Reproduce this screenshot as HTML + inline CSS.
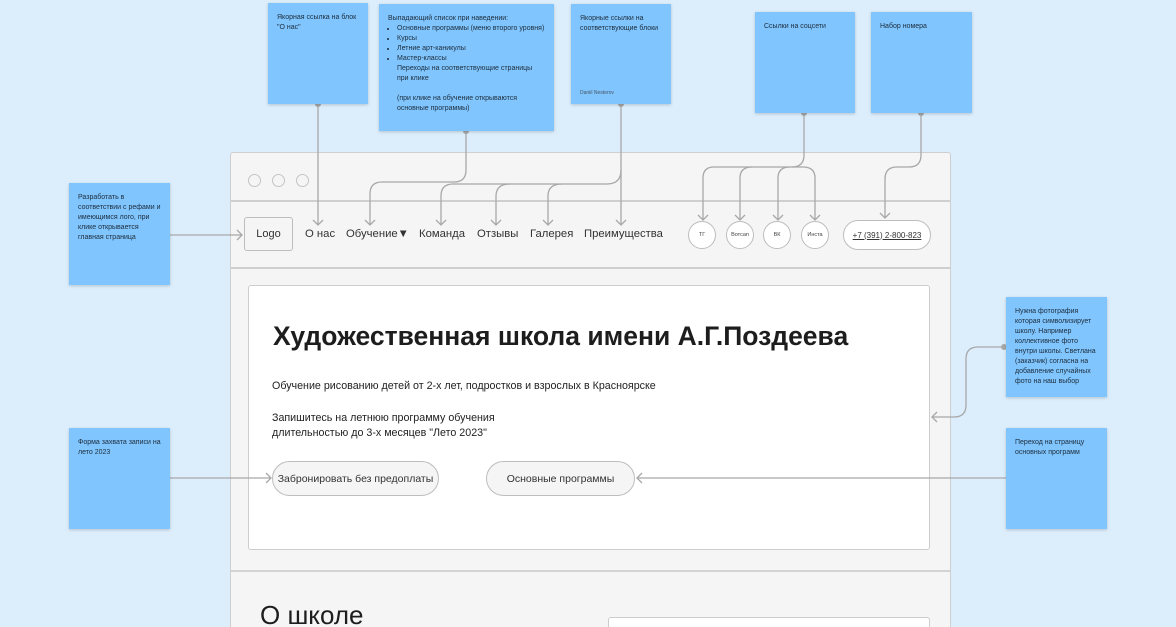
<!DOCTYPE html>
<html><head><meta charset="utf-8"><style>
*{margin:0;padding:0;box-sizing:border-box}
html,body{width:1176px;height:627px;overflow:hidden}
body{background:#dcedfb;font-family:"Liberation Sans","Noto Sans CJK SC",sans-serif;position:relative;color:#222}
.st{position:absolute;background:#80c5fd;box-shadow:0 1px 3px rgba(0,0,0,.18);font-size:7px;line-height:10px;color:#1c2c3c;padding:10px 9px}
.st ul{margin-left:9px}
.fr{position:absolute;left:230px;top:152px;width:721px;height:475px;background:#f5f5f5;border:1.5px solid #cfcfcf;border-bottom:none;border-radius:3px 3px 0 0}
.abs{position:absolute}
.nav{position:absolute;top:228px;font-size:11.3px;color:#333;white-space:nowrap}
.c{position:absolute;top:221px;width:28px;height:28px;border:1.5px solid #bdbdbd;border-radius:50%;background:#fff;font-size:5.5px;display:flex;align-items:center;justify-content:center;color:#444}
.btn{position:absolute;height:35px;border:1.5px solid #bdbdbd;border-radius:18px;background:#f5f5f5;font-size:10.5px;display:flex;align-items:center;justify-content:center;color:#333;white-space:nowrap}
</style></head><body>
<div class="fr"></div>
<div class="abs" style="left:231px;top:200px;width:719px;height:1.5px;background:#cfcfcf"></div>
<div class="abs" style="left:231px;top:267px;width:719px;height:2px;background:#cfcfcf"></div>
<div class="abs" style="left:231px;top:570px;width:719px;height:2px;background:#d3d3d3"></div>
<div class="abs" style="left:248px;top:174px;width:13px;height:13px;border:1.3px solid #c4c4c4;border-radius:50%"></div>
<div class="abs" style="left:272px;top:174px;width:13px;height:13px;border:1.3px solid #c4c4c4;border-radius:50%"></div>
<div class="abs" style="left:296px;top:174px;width:13px;height:13px;border:1.3px solid #c4c4c4;border-radius:50%"></div>
<div class="abs" style="left:244px;top:217px;width:49px;height:34px;border:1.5px solid #bdbdbd;border-radius:3px;font-size:11px;display:flex;align-items:center;justify-content:center;color:#333">Logo</div>
<div class="nav" style="left:305px">О нас</div>
<div class="nav" style="left:346px">Обучение▼</div>
<div class="nav" style="left:419px">Команда</div>
<div class="nav" style="left:477px">Отзывы</div>
<div class="nav" style="left:530px">Галерея</div>
<div class="nav" style="left:584px">Преимущества</div>
<div class="c" style="left:688px">ТГ</div>
<div class="c" style="left:726px">Вотсап</div>
<div class="c" style="left:763px">ВК</div>
<div class="c" style="left:801px">Инста</div>
<div class="abs" style="left:843px;top:220px;width:88px;height:30px;border:1.5px solid #bdbdbd;border-radius:15px;background:#fff;font-size:8px;display:flex;align-items:center;justify-content:center;text-decoration:underline;color:#333">+7 (391) 2-800-823</div>
<div class="abs" style="left:248px;top:285px;width:682px;height:265px;background:#fff;border:1.5px solid #cdcdcd;border-radius:3px"></div>
<div class="abs" style="left:273px;top:321px;font-size:26.5px;font-weight:bold;color:#1d1d1d;white-space:nowrap">Художественная школа имени А.Г.Поздеева</div>
<div class="abs" style="left:272px;top:380px;font-size:10.7px;white-space:nowrap">Обучение рисованию детей от 2-х лет, подростков и взрослых в Красноярске</div>
<div class="abs" style="left:272px;top:411px;font-size:10.7px;line-height:15px">Запишитесь на летнюю программу обучения<br>длительностью до 3-х месяцев "Лето 2023"</div>
<div class="btn" style="left:272px;top:461px;width:167px">Забронировать без предоплаты</div>
<div class="btn" style="left:486px;top:461px;width:149px">Основные программы</div>
<div class="abs" style="left:260px;top:600px;font-size:26px;color:#1d1d1d">О школе</div>
<div class="abs" style="left:608px;top:617px;width:322px;height:20px;background:#fff;border:1.5px solid #cdcdcd;border-radius:3px"></div>

<svg class="abs" style="left:0;top:0" width="1176" height="627" fill="none" stroke="#a8a8a8" stroke-width="1.3">
<path d="M318 104V225M313 220l5 5 5-5"/>
<path d="M466 131V170q0 12-12 12H382q-12 0-12 12V225M365 220l5 5 5-5"/>
<path d="M621 104V225M616 220l5 5 5-5"/>
<path d="M621 170q0 14-14 14H453q-12 0-12 12V225M436 220l5 5 5-5"/>
<path d="M510 184q-14 0-14 12V225M491 220l5 5 5-5"/>
<path d="M562 184q-14 0-14 12V225M543 220l5 5 5-5"/>
<path d="M804 113V155q0 12-12 12H714q-11 0-11 11V220M698 215l5 5 5-5"/>
<path d="M752 167q-12 0-12 11V220M735 215l5 5 5-5"/>
<path d="M790 167q-12 0-12 11V220M773 215l5 5 5-5"/>
<path d="M792 167h11q12 0 12 11V220M810 215l5 5 5-5"/>
<path d="M921 113V155q0 12-12 12H897q-12 0-12 12V218M880 213l5 5 5-5"/>
<path d="M170 235H242M237 230l5 5-5 5"/>
<path d="M1004 347H978q-12 0-12 12V405q0 12-12 12H932M937 412l-5 5 5 5"/>
<path d="M170 478H271M266 473l5 5-5 5"/>
<path d="M1006 478H637M642 473l-5 5 5 5"/>
<g fill="#a8a8a8" stroke="none"><circle cx="318" cy="104" r="3"/><circle cx="466" cy="131" r="3"/><circle cx="621" cy="104" r="3"/><circle cx="804" cy="113" r="3"/><circle cx="921" cy="113" r="3"/><circle cx="1004" cy="347" r="3"/></g>
</svg>

<div class="st" style="left:268px;top:3px;width:100px;height:101px">Якорная ссылка на блок "О нас"</div>
<div class="st" style="left:379px;top:4px;width:175px;height:127px">Выпадающий список при наведении:
<ul><li>Основные программы (меню второго уровня)</li><li>Курсы</li><li>Летние арт-каникулы</li><li>Мастер-классы</li></ul>
<div style="margin-left:9px">Переходы на соответствующие страницы при клике<br><br>(при клике на обучение открываются основные программы)</div></div>
<div class="st" style="left:571px;top:4px;width:100px;height:100px">Якорные ссылки на соответствующие блоки<div style="position:absolute;left:9px;top:84px;font-size:5px;color:#456">Daniil Nesterov</div></div>
<div class="st" style="left:755px;top:12px;width:100px;height:101px">Ссылки на соцсети</div>
<div class="st" style="left:871px;top:12px;width:101px;height:101px">Набор номера</div>
<div class="st" style="left:69px;top:183px;width:101px;height:102px">Разработать в соответствии с рефами и имеющимся лого, при клике открывается главная страница</div>
<div class="st" style="left:69px;top:428px;width:101px;height:101px">Форма захвата записи на лето 2023</div>
<div class="st" style="left:1006px;top:297px;width:101px;height:100px">Нужна фотография которая символизирует школу. Например коллективное фото внутри школы. Светлана (заказчик) согласна на добавление случайных фото на наш выбор</div>
<div class="st" style="left:1006px;top:428px;width:101px;height:101px">Переход на страницу основных программ</div>
</body></html>
